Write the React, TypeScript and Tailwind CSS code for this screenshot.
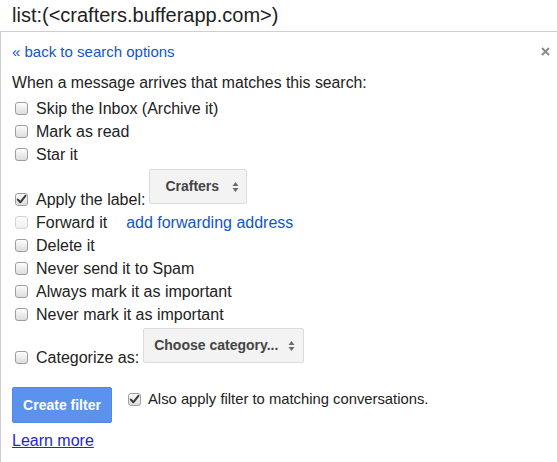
import React from "react";

type BoxState = "off" | "on" | "disabled";

const CheckBox: React.FC<{ state?: BoxState }> = ({ state = "off" }) => {
  const base =
    state === "disabled"
      ? "border-[#d4d4d4] bg-gradient-to-b from-[#fbfbfb] to-[#f0f0f0]"
      : "border-[#9e9e9e] bg-gradient-to-b from-[#fdfdfd] to-[#dcdcdc] shadow-[inset_0_1px_0_#fff]";
  return (
    <span className={`relative inline-flex w-[13px] h-[13px] shrink-0 rounded-[3px] border ${base}`}>
      {state === "on" && (
        <svg viewBox="0 0 13 13" className="absolute -left-px -top-px w-[13px] h-[13px]">
          <path d="M2.8 6.6 L5.3 9.3 L10.4 2.9" fill="none" stroke="#3a3a3a" strokeWidth="2" strokeLinecap="round" strokeLinejoin="round" />
        </svg>
      )}
    </span>
  );
};

const Arrows: React.FC = () => (
  <svg viewBox="0 0 7 12" className="w-[7px] h-[12px] shrink-0">
    <path d="M0.5 5 L3.5 1 L6.5 5 Z" fill="#6b6b6b" />
    <path d="M0.5 7 L3.5 11 L6.5 7 Z" fill="#6b6b6b" />
  </svg>
);

const Row: React.FC<{ label: string; state?: BoxState; children?: React.ReactNode }> = ({ label, state, children }) => (
  <div className="flex items-center h-[23px]">
    <span className="ml-[3px] mr-[8px] flex">
      <CheckBox state={state} />
    </span>
    <span>{label}</span>
    {children}
  </div>
);

export default function App() {
  const rows = ["Delete it", "Never send it to Spam", "Always mark it as important", "Never mark it as important"];
  return (
    <div className="w-[557px] h-[462px] bg-white text-[#222] text-[16px] leading-[23px] font-['Liberation_Sans',Arial,sans-serif] overflow-hidden">
      <div className="h-[31px] flex items-center pl-[12px] text-[20px] text-[#222] border-b border-[#cfcfcf] box-content">
        list:(&lt;crafters.bufferapp.com&gt;)
      </div>
      <div className="relative border-l border-[#cfcfcf] pl-[11px] h-[430px]">
        <svg viewBox="0 0 9 9" className="absolute right-[7px] top-[15px] w-[9px] h-[9px]">
          <path d="M1 1 L8 8 M8 1 L1 8" stroke="#8a8a8a" strokeWidth="2" />
        </svg>
        <div className="pt-[8px] text-[15px] text-[#1155cc]">« back to search options</div>
        <div className="mt-[7.5px] text-[15.8px]">When a message arrives that matches this search:</div>
        <div className="mt-[3.5px]">
          <Row label="Skip the Inbox (Archive it)" />
          <Row label="Mark as read" />
          <Row label="Star it" />
          <div className="flex items-end h-[44.5px]">
            <div className="flex items-center h-[23px]">
              <span className="ml-[3px] mr-[8px] flex">
                <CheckBox state="on" />
              </span>
              <span>Apply the label:</span>
            </div>
            <div className="self-start mt-[3px] ml-[4px] w-[98px] h-[35px] flex items-center pl-[15px] pr-[7px] justify-between bg-[#f3f3f3] border border-[#dcdcdc] rounded-[2px] text-[14px] font-bold text-[#444]">
              <span>Crafters</span>
              <Arrows />
            </div>
          </div>
          <Row label="Forward it" state="disabled">
            <span className="ml-[19px] text-[#1155cc]">add forwarding address</span>
          </Row>
          {rows.map((r) => (
            <Row key={r} label={r} />
          ))}
          <div className="flex items-end h-[43px]">
            <div className="flex items-center h-[23px]">
              <span className="ml-[3px] mr-[8px] flex">
                <CheckBox />
              </span>
              <span>Categorize as:</span>
            </div>
            <div className="self-start mt-[2.5px] ml-[4px] w-[161px] h-[35px] flex items-center pl-[10px] pr-[8px] justify-between bg-[#f3f3f3] border border-[#dcdcdc] rounded-[2px] text-[14px] font-bold text-[#444]">
              <span>Choose category...</span>
              <Arrows />
            </div>
          </div>
        </div>
        <div className="mt-[18.5px] flex items-start">
          <button className="w-[100px] h-[36px] rounded-[2px] bg-[#5a92ee] border border-[#5089e6] text-white text-[14px] font-bold flex items-center justify-center">
            Create filter
          </button>
          <div className="ml-[16px] flex items-center h-[24px] text-[14.8px]">
            <span className="mr-[7px] flex">
              <CheckBox state="on" />
            </span>
            <span>Also apply filter to matching conversations.</span>
          </div>
        </div>
        <div className="mt-[5.5px]">
          <a className="text-[#2424d6] underline">Learn more</a>
        </div>
      </div>
    </div>
  );
}
